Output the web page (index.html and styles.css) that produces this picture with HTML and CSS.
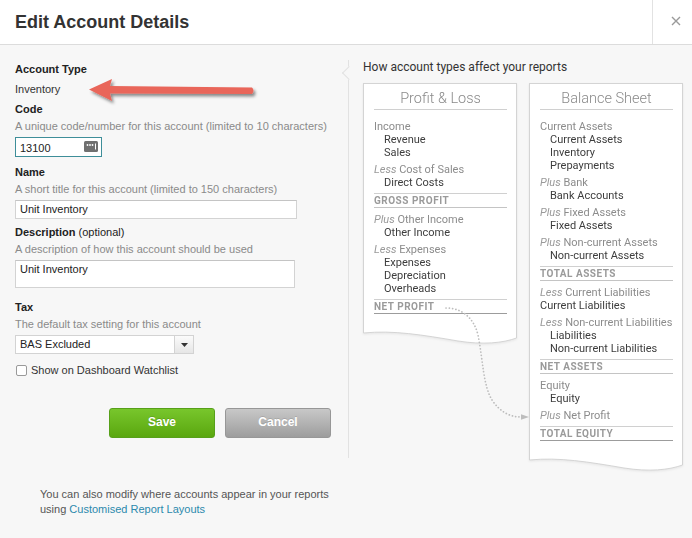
FILE: index.html
```html
<!DOCTYPE html>
<html>
<head>
<meta charset="utf-8">
<link rel="stylesheet" href="styles.css">
</head>
<body>
<div class="dialog">
  <header class="head">
    <h1 class="title">Edit Account Details</h1>
    <div class="close">
      <svg width="10" height="10" viewBox="0 0 10 10"><path d="M1 1 L9 9 M9 1 L1 9" stroke="#9a9a9a" stroke-width="1.4" fill="none"/></svg>
    </div>
  </header>
  <div class="main">
    <div class="left">
      <div class="label">Account Type</div>
      <div class="value">Inventory</div>

      <div class="field field-code">
        <div class="label">Code</div>
        <div class="hint">A unique code/number for this account (limited to 10 characters)</div>
        <div class="input code-input">
          <span>13100</span>
          <svg class="code-icon" width="14" height="11" viewBox="0 0 14 11">
            <rect x="0" y="0" width="14" height="11" rx="1.5" fill="#707070"/>
            <circle cx="3.5" cy="4" r="0.9" fill="#fff"/>
            <circle cx="6" cy="4" r="0.9" fill="#fff"/>
            <circle cx="8.5" cy="4" r="0.9" fill="#fff"/>
            <path d="M11.5 2.5 V8.5" stroke="#fff" stroke-width="1"/>
          </svg>
        </div>
      </div>

      <div class="field field-name">
        <div class="label">Name</div>
        <div class="hint">A short title for this account (limited to 150 characters)</div>
        <div class="input name-input">Unit Inventory</div>
      </div>

      <div class="field field-desc">
        <div class="label">Description <span class="normal">(optional)</span></div>
        <div class="hint">A description of how this account should be used</div>
        <div class="input textarea">Unit Inventory</div>
      </div>

      <div class="field field-tax">
        <div class="label">Tax</div>
        <div class="hint">The default tax setting for this account</div>
        <div class="select">
          <span class="select-text">BAS Excluded</span>
          <span class="select-btn"><svg width="7" height="4" viewBox="0 0 7 4"><path d="M0 0 H7 L3.5 4 Z" fill="#333"/></svg></span>
        </div>
      </div>

      <div class="check-row">
        <span class="checkbox"></span>
        <span>Show on Dashboard Watchlist</span>
      </div>

      <div class="buttons">
        <button class="btn btn-save">Save</button>
        <button class="btn btn-cancel">Cancel</button>
      </div>

      <p class="note">You can also modify where accounts appear in your reports<br>using <a class="link">Customised Report Layouts</a></p>
    </div>

    <div class="right">
      <div class="right-title">How account types affect your reports</div>
      <div class="reports">
        <div class="report">
          <div class="report-title">Profit &amp; Loss</div>
          <div class="report-body">
            <div class="grp"><div class="cat">Income</div><div class="item">Revenue</div><div class="item">Sales</div></div>
            <div class="grp"><div class="cat"><i>Less</i> Cost of Sales</div><div class="item">Direct Costs</div></div>
            <div class="total">Gross Profit</div>
            <div class="grp"><div class="cat"><i>Plus</i> Other Income</div><div class="item">Other Income</div></div>
            <div class="grp"><div class="cat"><i>Less</i> Expenses</div><div class="item">Expenses</div><div class="item">Depreciation</div><div class="item">Overheads</div></div>
            <div class="total final">Net Profit</div>
          </div>
          <svg class="wave" width="154" height="16" viewBox="0 0 154 16">
            <path d="M0.5 0 L0.5 2 C30 -1 60 4 95 10 C120 14 140 12 153.5 7 L153.5 0 Z" fill="#fff"/>
            <path d="M0.5 0 L0.5 2 C30 -1 60 4 95 10 C120 14 140 12 153.5 7 L153.5 0" fill="none" stroke="#d4d4d4" stroke-width="1"/>
          </svg>
        </div>

        <div class="report">
          <div class="report-title">Balance Sheet</div>
          <div class="report-body">
            <div class="grp"><div class="cat">Current Assets</div><div class="item">Current Assets</div><div class="item">Inventory</div><div class="item">Prepayments</div></div>
            <div class="grp"><div class="cat"><i>Plus</i> Bank</div><div class="item">Bank Accounts</div></div>
            <div class="grp"><div class="cat"><i>Plus</i> Fixed Assets</div><div class="item">Fixed Assets</div></div>
            <div class="grp"><div class="cat"><i>Plus</i> Non-current Assets</div><div class="item">Non-current Assets</div></div>
            <div class="total">Total Assets</div>
            <div class="grp"><div class="cat"><i>Less</i> Current Liabilities</div><div class="item flush">Current Liabilities</div></div>
            <div class="grp"><div class="cat"><i>Less</i> Non-current Liabilities</div><div class="item">Liabilities</div><div class="item">Non-current Liabilities</div></div>
            <div class="total">Net Assets</div>
            <div class="grp"><div class="cat">Equity</div><div class="item">Equity</div></div>
            <div class="grp"><div class="cat"><i>Plus</i> Net Profit</div></div>
            <div class="total final">Total Equity</div>
          </div>
          <svg class="wave" width="154" height="16" viewBox="0 0 154 16">
            <path d="M0.5 0 L0.5 2 C30 -1 60 4 95 10 C120 14 140 12 153.5 7 L153.5 0 Z" fill="#fff"/>
            <path d="M0.5 0 L0.5 2 C30 -1 60 4 95 10 C120 14 140 12 153.5 7 L153.5 0" fill="none" stroke="#d4d4d4" stroke-width="1"/>
          </svg>
        </div>
      </div>
    </div>
  </div>

  <svg class="overlay" width="692" height="538" viewBox="0 0 692 538">
    <defs>
      <filter id="sh" x="-10%" y="-50%" width="130%" height="250%">
        <feDropShadow dx="2" dy="2.5" stdDeviation="1.6" flood-color="#000" flood-opacity="0.45"/>
      </filter>
    </defs>
    <g filter="url(#sh)">
      <path d="M89 89.5 L112 79 L110 86 L252 87.5 Q255 90.5 252 94 L110 93.5 L112 101 Z" fill="#e9665a"/>
    </g>
    <path d="M446 308 C462 308 474 318 478 335 C483 360 483 385 492 400 C500 412 510 417 521 417" fill="none" stroke="#bdbdbd" stroke-width="1.7" stroke-dasharray="0.1 3.2" stroke-linecap="round"/>
    <path d="M521 414.3 L529 417 L521 419.7 Z" fill="#bdbdbd"/>
  </svg>
</div>
</body>
</html>
```

FILE: styles.css
```css
html, body {
  margin: 0;
  padding: 0;
}

.dialog {
  position: relative;
  width: 692px;
  height: 538px;
  background: #f7f7f7;
  font-family: "Liberation Sans", Arial, sans-serif;
  font-size: 11px;
  color: #333;
  overflow: hidden;
}

.head {
  height: 44px;
  background: #fff;
  border-bottom: 1px solid #dcdcdc;
  display: flex;
  align-items: center;
  justify-content: space-between;
}

.title {
  margin: 0 0 0 15px;
  font-size: 18px;
  line-height: 22px;
  font-weight: bold;
  color: #333;
}

.close {
  width: 40px;
  height: 44px;
  box-sizing: border-box;
  border-left: 1px solid #e2e2e2;
  display: flex;
  align-items: center;
  justify-content: center;
  padding-left: 6px;
  padding-bottom: 3px;
}

.main {
  display: flex;
  align-items: flex-start;
}

.left {
  width: 348px;
  box-sizing: border-box;
  padding: 17px 17px 0 15px;
  display: flex;
  flex-direction: column;
  align-items: flex-start;
}

.label {
  font-weight: bold;
  line-height: 14px;
  color: #222;
}

.label .normal {
  font-weight: normal;
}

.value {
  margin-top: 6px;
  line-height: 14px;
  color: #333;
}

.field {
  display: flex;
  flex-direction: column;
  align-items: flex-start;
}

.field-code { margin-top: 6px; }
.field-name { margin-top: 8px; }
.field-desc { margin-top: 6px; }
.field-tax { margin-top: 12px; }

.hint {
  margin-top: 3px;
  line-height: 14px;
  color: #8a8a8a;
  white-space: nowrap;
}

.input {
  margin-top: 4px;
  box-sizing: border-box;
  background: #fff;
  border: 1px solid #d3d3d3;
  border-top-color: #c4c4c4;
  padding-left: 4px;
  color: #222;
}

.code-input {
  width: 87px;
  height: 20px;
  border: 1px solid #3e8e99;
  display: flex;
  align-items: center;
  justify-content: space-between;
  padding-right: 3px;
  padding-top: 1px;
}

.code-icon {
  margin-top: -3px;
}

.name-input {
  width: 282px;
  height: 19px;
  line-height: 17px;
}

.textarea {
  width: 280px;
  height: 28px;
  line-height: 14px;
  padding-top: 1px;
}

.select {
  margin-top: 4px;
  width: 179px;
  height: 19px;
  box-sizing: border-box;
  background: #fff;
  border: 1px solid #d3d3d3;
  display: flex;
}

.select-text {
  flex: 1;
  padding-left: 4px;
  line-height: 17px;
  color: #222;
}

.select-btn {
  width: 18px;
  border-left: 1px solid #d3d3d3;
  background: linear-gradient(#fbfbfb, #e6e6e6);
  display: flex;
  align-items: center;
  justify-content: center;
}

.check-row {
  margin-top: 9px;
  display: flex;
  align-items: center;
  gap: 4px;
  line-height: 14px;
  color: #333;
}

.checkbox {
  width: 11px;
  height: 11px;
  box-sizing: border-box;
  border: 1px solid #9a9a9a;
  border-radius: 2px;
  background: #fff;
  margin-left: 1px;
}

.buttons {
  margin-top: 31px;
  align-self: stretch;
  display: flex;
  justify-content: flex-end;
  gap: 10px;
}

.btn {
  width: 106px;
  height: 30px;
  border-radius: 3px;
  font-family: "Liberation Sans", Arial, sans-serif;
  font-size: 12px;
  font-weight: bold;
  color: #fff;
  padding: 0 0 2px 0;
}

.btn-save {
  background: linear-gradient(#78c62c, #5aa70f);
  border: 1px solid #57a01a;
  text-shadow: 0 -1px 0 rgba(0, 0, 0, 0.15);
}

.btn-cancel {
  background: linear-gradient(#c8c8c8, #9d9d9d);
  border: 1px solid #979797;
  text-shadow: 0 -1px 0 rgba(0, 0, 0, 0.12);
}

.note {
  margin: 49px 0 0 25px;
  line-height: 15px;
  color: #555;
}

.link {
  color: #2b89ad;
  text-decoration: none;
}

.right {
  position: relative;
  margin-top: 15px;
  height: 398px;
  border-left: 1px solid #e2e2e2;
  padding-left: 14px;
  font-family: Roboto, "Liberation Sans", sans-serif;
}

.right::before {
  content: "";
  position: absolute;
  left: -5px;
  top: 8px;
  width: 9px;
  height: 9px;
  background: #f7f7f7;
  border-left: 1px solid #e2e2e2;
  border-bottom: 1px solid #e2e2e2;
  transform: rotate(45deg);
}

.right-title {
  font-size: 12px;
  line-height: 15px;
  color: #333;
}

.reports {
  margin-top: 8px;
  display: flex;
  align-items: flex-start;
  gap: 12px;
}

.report {
  width: 154px;
  box-sizing: border-box;
  background: #fff;
  border: 1px solid #d4d4d4;
  border-bottom: none;
  filter: drop-shadow(0 1px 1px rgba(0, 0, 0, 0.07));
  display: flex;
  flex-direction: column;
}

.report-title {
  margin: 0 9px 0 10px;
  padding-top: 5px;
  line-height: 20px;
  font-size: 14.5px;
  font-weight: 300;
  color: #8a8a8a;
  text-align: center;
  border-bottom: 1px solid #d0d0d0;
}

.report-body {
  padding: 10px 9px 17px 10px;
  font-size: 11px;
}

.grp {
  margin-bottom: 4px;
}

.cat {
  line-height: 13px;
  color: #8c8c8c;
  white-space: nowrap;
}

.cat i {
  color: #9a9a9a;
}

.item {
  line-height: 13px;
  padding-left: 10px;
  color: #3d3d3d;
  white-space: nowrap;
}

.item.flush {
  padding-left: 0;
}

.total {
  margin-bottom: 5px;
  border-top: 1px solid #d0d0d0;
  border-bottom: 1px solid #c4c4c4;
  line-height: 13px;
  font-size: 10px;
  font-weight: 700;
  letter-spacing: 0.5px;
  text-transform: uppercase;
  color: #9a9a9a;
}

.total.final {
  border-bottom-color: #9c9c9c;
  margin-bottom: 0;
}

.wave {
  display: block;
  margin: 0 -1px -15px -1px;
}

.overlay {
  position: absolute;
  left: 0;
  top: 0;
  pointer-events: none;
}
```
